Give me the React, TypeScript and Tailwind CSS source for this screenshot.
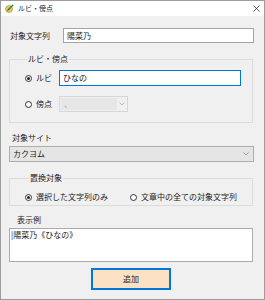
import { FC } from "react";

const font = { fontFamily: '"Noto Sans CJK JP", "Noto Sans", sans-serif' };

const Radio: FC<{ checked?: boolean; label: string }> = ({ checked, label }) => (
  <div className="flex items-center h-[10px]">
    <div className="w-[7px] h-[7px] rounded-full border border-[#333] bg-white flex items-center justify-center">
      {checked && <div className="w-[3px] h-[3px] rounded-full bg-[#222]" />}
    </div>
    <span className="ml-[4px] text-[8px] leading-[10px] text-[#1b1b1b]">{label}</span>
  </div>
);

const Chevron: FC<{ color?: string }> = ({ color = "#888" }) => (
  <svg width="6" height="4" viewBox="0 0 6 4">
    <path d="M0.5 0.5 L3 3 L5.5 0.5" fill="none" stroke={color} strokeWidth="0.8" />
  </svg>
);

const App: FC = () => {
  return (
    <div
      className="w-[265px] h-[300px] bg-[#f0f0f0] border border-[#9c9c9c] flex flex-col overflow-hidden"
      style={font}
    >
      {/* title bar */}
      <div className="h-[15px] bg-white flex items-center shrink-0">
        <svg width="9" height="9" viewBox="0 0 9 9" className="ml-[4px]">
          <circle cx="4" cy="5" r="3.5" fill="#e8c86a" stroke="#b08a2a" strokeWidth="0.6" />
          <path d="M3 6 L8 1" stroke="#3a8a3a" strokeWidth="1.6" />
          <path d="M2.5 6.5 L3.5 5.5" stroke="#222" strokeWidth="1" />
        </svg>
        <span className="ml-[4px] text-[7px] leading-[9px] text-[#222]">ルビ・傍点</span>
        <svg width="7" height="7" viewBox="0 0 7 7" className="ml-auto mr-[4px]">
          <path d="M0.5 0.5 L6.5 6.5 M6.5 0.5 L0.5 6.5" stroke="#333" strokeWidth="0.8" />
        </svg>
      </div>

      <div className="flex flex-col pl-[8px] pt-[12px]">
        {/* target string */}
        <div className="flex items-center h-[15px]">
          <span className="ml-[1px] w-[53px] text-[8px] leading-[10px] text-[#1b1b1b]">対象文字列</span>
          <div className="w-[191px] h-[15px] bg-white border border-[#a5a5a5] flex items-center pl-[3px] text-[8px] text-[#1b1b1b]">
            陽菜乃
          </div>
        </div>

        {/* ruby / emphasis group */}
        <fieldset className="mt-[11px] w-[244px] border border-[#dcdcdc] pl-[15px] pb-[10px]">
          <legend className="ml-[2px] px-[1px] text-[8px] leading-[10px] text-[#1b1b1b]">ルビ・傍点</legend>
          <div className="flex items-center mt-[6px] h-[16px]">
            <div className="w-[34px]">
              <Radio checked label="ルビ" />
            </div>
            <div className="w-[182px] h-[16px] bg-white border border-[#0078d7] flex items-center pl-[3px] text-[8px] text-[#1b1b1b]">
              ひなの
            </div>
          </div>
          <div className="flex items-center mt-[10px] h-[16px]">
            <div className="w-[34px]">
              <Radio label="傍点" />
            </div>
            <div className="w-[69px] h-[16px] border border-[#d6d6d6] bg-[#f0f0f0] flex items-center p-[1px]">
              <div className="w-[56px] h-full bg-[#e6e6e6] pl-[3px] text-[8px] leading-[12px] text-[#aaa]">、</div>
              <div className="flex-1 flex justify-center">
                <Chevron color="#aaa" />
              </div>
            </div>
          </div>
        </fieldset>

        {/* target site */}
        <span className="mt-[10px] ml-[3px] text-[8px] leading-[10px] text-[#1b1b1b]">対象サイト</span>
        <div className="mt-[3px] w-[245px] h-[16px] bg-[#e5e5e5] border border-[#adadad] flex items-center pl-[3px] pr-[4px] text-[8px] text-[#1b1b1b]">
          カクヨム
          <div className="ml-auto">
            <Chevron />
          </div>
        </div>

        {/* replace target group */}
        <fieldset className="mt-[11px] w-[244px] border border-[#dcdcdc] pl-[15px] pb-[3px]">
          <legend className="ml-[4px] px-[1px] text-[8px] leading-[10px] text-[#1b1b1b]">置換対象</legend>
          <div className="flex items-center mt-[9px]">
            <div className="w-[105px]">
              <Radio checked label="選択した文字列のみ" />
            </div>
            <Radio label="文章中の全ての対象文字列" />
          </div>
        </fieldset>

        {/* preview */}
        <span className="mt-[9px] ml-[8px] text-[8px] leading-[10px] text-[#1b1b1b]">表示例</span>
        <div className="mt-[3px] w-[244px] h-[34px] bg-white border border-[#ababab] pl-[1px] pt-[1px] text-[8px] leading-[10px] text-[#1b1b1b]">
          |陽菜乃《ひなの》
        </div>

        {/* add button */}
        <div className="mt-[6px] w-[244px] flex justify-center">
          <button className="w-[80px] h-[22px] bg-[#fde1c4] border-2 border-[#0078d7] text-[8px] text-[#1b1b1b]">
            追加
          </button>
        </div>
      </div>
    </div>
  );
};

export default App;
